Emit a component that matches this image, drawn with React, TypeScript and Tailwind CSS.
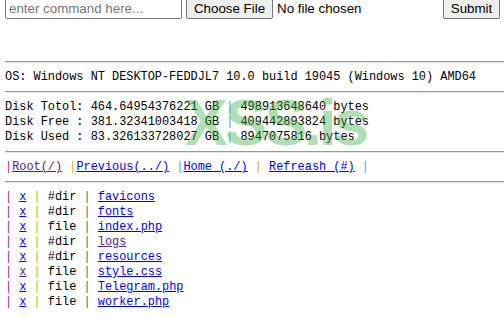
const mono = "font-['Liberation_Mono',monospace] text-[11.9px] leading-[15px]";

const files = [
  { type: "#dir", name: "favicons" },
  { type: "#dir", name: "fonts" },
  { type: "file", name: "index.php" },
  { type: "#dir", name: "logs", visited: true },
  { type: "#dir", name: "resources" },
  { type: "file", name: "style.css", xVisited: true },
  { type: "file", name: "Telegram.php" },
  { type: "file", name: "worker.php" },
];

function Rule() {
  return <div className="h-0 border-t border-b border-t-[#9a9a9a] border-b-[#e6e6e6]" />;
}

function Pipe({ c }: { c: string }) {
  return <span className={c}>|</span>;
}

export default function App() {
  return (
    <div className="relative h-[317px] w-[504px] overflow-hidden bg-white text-black">
      <div className="-mt-[2px] flex h-[21px] items-center pl-[5px] pr-[4px] font-['Liberation_Sans',Arial,sans-serif] text-[13.33px]">
        <input
          className="h-[21px] w-[177px] rounded-[2px] border border-[#767676] px-[3px] placeholder:text-[#757575]"
          placeholder="enter command here..."
        />
        <button className="ml-[4px] h-[21px] w-[87px] rounded-[2px] border border-[#767676] bg-[#efefef] leading-none">
          Choose File
        </button>
        <span className="ml-[4px]">No file chosen</span>
        <button className="ml-auto h-[21px] w-[57px] rounded-[2px] border border-[#767676] bg-[#efefef] leading-none">
          Submit
        </button>
      </div>

      <div className="mt-[42px] pl-[5px]">
        <Rule />
        <div className={`${mono} pt-[7px] pb-[6px] whitespace-pre`}>
          OS: Windows NT DESKTOP-FEDDJL7 10.0 build 19045 (Windows 10) AMD64
        </div>
        <Rule />
        <div className={`${mono} pt-[7px] pb-[6px] whitespace-pre`}>
          <div>
            Disk Totol: 464.64954376221 GB <Pipe c="text-[#5a9fdc]" /> 498913648640 bytes
          </div>
          <div>
            Disk Free : 381.32341003418 GB <Pipe c="text-[#5a9fdc]" /> 409442893824 bytes
          </div>
          <div>
            Disk Used : 83.326133728027 GB <Pipe c="text-[#5a9fdc]" /> 8947075816 bytes
          </div>
        </div>
        <Rule />
        <div className={`${mono} pt-[7px] pb-[6px] whitespace-pre`}>
          <Pipe c="text-[#8b1a8b]" />
          <a href="#" className="text-[#551a8b] underline">Root(/)</a>{" "}
          <Pipe c="text-[#e0a030]" />
          <a href="#" className="text-[#0000ee] underline">Previous(../)</a>{" "}
          <Pipe c="text-[#5a9fdc]" />
          <a href="#" className="text-[#0000ee] underline">Home (./)</a>{" "}
          <Pipe c="text-[#e0a030]" />{" "}
          <a href="#" className="text-[#0000ee] underline">Refreash (#)</a>{" "}
          <Pipe c="text-[#5a9fdc]" />
        </div>
        <Rule />
        <div className={`${mono} pt-[7px] pb-[6px] whitespace-pre`}>
          {files.map((f) => (
            <div key={f.name}>
              <Pipe c="text-[#8b1a8b]" />{" "}
              <a href="#" className={`${f.xVisited ? "text-[#551a8b]" : "text-[#0000ee]"} underline`}>x</a>{" "}
              <Pipe c="text-[#e0a030]" /> {f.type}{" "}
              <Pipe c="text-[#666]" />{" "}
              <a href="#" className={`${f.visited ? "text-[#551a8b]" : "text-[#0000ee]"} underline`}>{f.name}</a>
            </div>
          ))}
        </div>
      </div>

      <div className="pointer-events-none absolute left-[185px] top-[91px] font-['Liberation_Sans',Arial,sans-serif] text-[64px] font-bold leading-none tracking-[-3px] whitespace-nowrap text-[#3cb043]/40">
        XSS.is
      </div>
    </div>
  );
}
